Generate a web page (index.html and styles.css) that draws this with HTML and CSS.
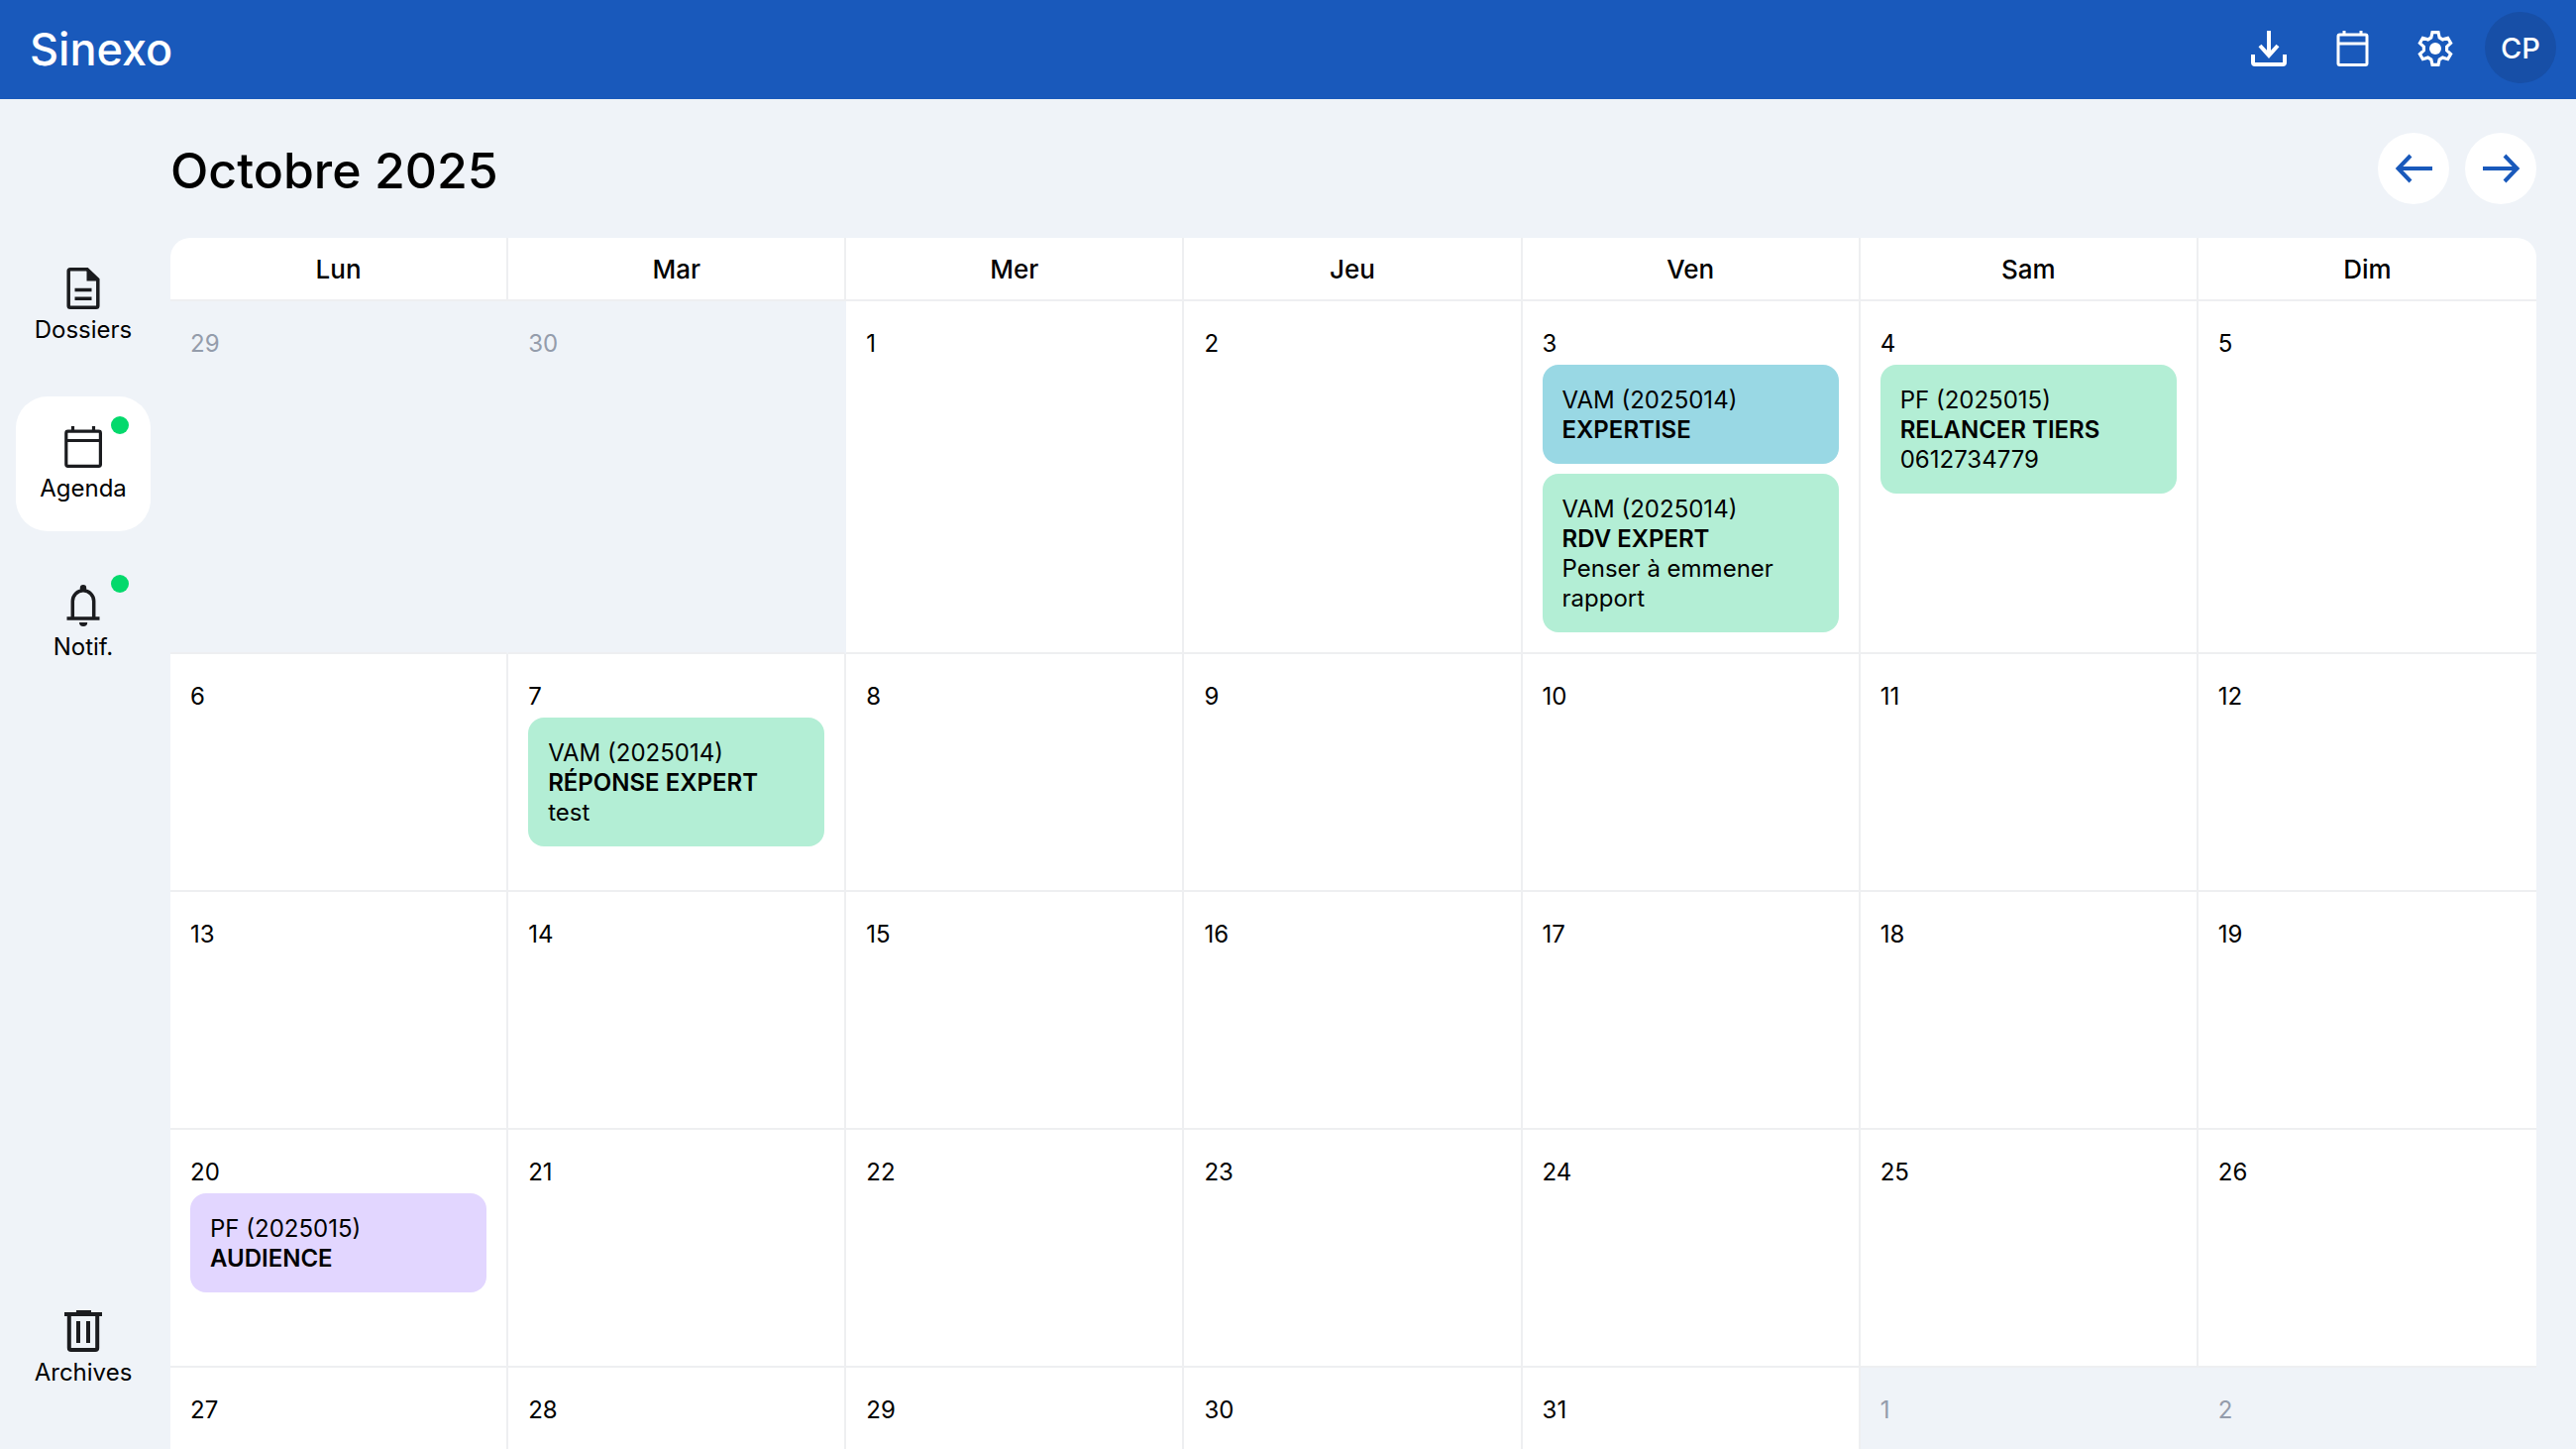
FILE: index.html
```
<!DOCTYPE html>
<html lang="fr">

<head>
    <meta charset="UTF-8">
    <meta name="viewport" content="width=device-width, initial-scale=1.0">
    <title>Sinexo - Agenda</title>
    <link rel="stylesheet" href="styles.css">
</head>

<body>
    <header class="topbar">
        <a href="#" class="brand">Sinexo</a>
        <div class="topbar-right">
            <div class="topbar-icons">
                <button type="button" class="icon-btn" aria-label="Télécharger">
                    <svg class="top-icon" viewBox="0 0 48 48" fill="none" stroke="currentColor" stroke-width="4">
                        <path d="M24 7v25M15 22l9 10 9-10M8 31v8q0 2 2 2h28q2 0 2-2v-8" />
                    </svg>
                </button>
                <button type="button" class="icon-btn" aria-label="Calendrier">
                    <svg class="top-icon" viewBox="0 0 48 48" fill="none" stroke="currentColor" stroke-width="3">
                        <rect x="10" y="11" width="29" height="30.500" rx="1.500" />
                        <path d="M10 20h29M16 7v4M33 7v4" />
                    </svg>
                </button>
                <button type="button" class="icon-btn" aria-label="Paramètres">
                    <svg class="top-icon" viewBox="0 0 48 48">
                        <g transform="translate(24 25)">
                            <path fill="none" stroke="currentColor" stroke-width="3.200"
                                d="M-3-16.300H3L4.200-11 7.400-9.100 12.600-10.700 15.600-5.500 11.600-1.900V1.900L15.600 5.500 12.600 10.700 7.400 9.100 4.200 11 3 16.300H-3L-4.200 11-7.400 9.100-12.600 10.700-15.600 5.500-11.600 1.900V-1.900L-15.600-5.500-12.600-10.700-7.400-9.100-4.200-11z" />
                            <circle r="6" fill="currentColor" />
                        </g>
                    </svg>
                </button>
            </div>
            <button type="button" class="avatar">CP</button>
        </div>
    </header>

    <div class="layout">
        <nav class="sidebar">
            <a href="#" class="nav-item">
                <svg class="nav-icon" viewBox="0 0 50 50" fill="none" stroke="currentColor" stroke-width="3.500">
                    <path d="M12 3.700h17L39.800 14v26.500q0 1.800-1.800 1.800H12q-1.800 0-1.800-1.800v-35q0-1.800 1.800-1.800z" />
                    <path d="M16.500 24.500h17M16.500 33.300h17" />
                    <path d="M28.500 3v12.500H41z" fill="currentColor" stroke="none" />
                </svg>
                <span>Dossiers</span>
            </a>
            <a href="#" class="nav-item nav-active">
                <svg class="nav-icon" viewBox="0 0 50 50" fill="none" stroke="currentColor" stroke-width="3.200">
                    <rect x="7.800" y="7.200" width="34.600" height="35.200" rx="1.800" />
                    <path d="M8 16.500h34M14.500 2v5M35.500 2v5" />
                </svg>
                <span>Agenda</span>
                <span class="dot"></span>
            </a>
            <a href="#" class="nav-item">
                <svg class="nav-icon" viewBox="0 0 50 50" fill="none" stroke="currentColor" stroke-width="3.500">
                    <path d="M14.300 36V18.500a10.700 10.700 0 0 1 21.400 0V36M8.500 36h33" />
                    <circle cx="25" cy="5.200" r="3.200" fill="currentColor" stroke="none" />
                    <path d="M21 40h8.200a4.100 4.100 0 0 1-8.200 0z" fill="currentColor" stroke="none" />
                </svg>
                <span>Notif.</span>
                <span class="dot"></span>
            </a>
            <a href="#" class="nav-item nav-bottom">
                <svg class="nav-icon" viewBox="0 0 50 50" fill="none" stroke="currentColor" stroke-width="4">
                    <path d="M6 6h38M18 4h15M20 13v22M30 13v22M10.800 7v33q0 2 2 2h24.400q2 0 2-2V7" />
                </svg>
                <span>Archives</span>
            </a>
        </nav>

        <main class="content">
            <div class="month-bar">
                <h1>Octobre 2025</h1>
                <div class="month-nav">
                    <button type="button" class="round-btn" aria-label="Mois précédent">
                        <svg class="arrow" viewBox="0 0 40 40" fill="none" stroke="currentColor" stroke-width="4">
                            <path d="M39 20H5M17 7L4.500 20 17 33" />
                        </svg>
                    </button>
                    <button type="button" class="round-btn" aria-label="Mois suivant">
                        <svg class="arrow" viewBox="0 0 40 40" fill="none" stroke="currentColor" stroke-width="4">
                            <path d="M2 20h34M24 7l12.500 13L24 33" />
                        </svg>
                    </button>
                </div>
            </div>

            <table class="calendar">
                <thead>
                    <tr>
                        <th>Lun</th>
                        <th>Mar</th>
                        <th>Mer</th>
                        <th>Jeu</th>
                        <th>Ven</th>
                        <th>Sam</th>
                        <th>Dim</th>
                    </tr>
                </thead>
                <tbody>
                    <tr>
                        <td class="other-month"><div class="day">29</div></td>
                        <td class="other-month"><div class="day">30</div></td>
                        <td><div class="day">1</div></td>
                        <td><div class="day">2</div></td>
                        <td>
                            <div class="day">3</div>
                            <div class="event event-blue">
                                <p>VAM (2025014)</p>
                                <p class="event-title">EXPERTISE</p>
                            </div>
                            <div class="event event-green">
                                <p>VAM (2025014)</p>
                                <p class="event-title">RDV EXPERT</p>
                                <p>Penser à emmener rapport</p>
                            </div>
                        </td>
                        <td>
                            <div class="day">4</div>
                            <div class="event event-green">
                                <p>PF (2025015)</p>
                                <p class="event-title">RELANCER TIERS</p>
                                <p>0612734779</p>
                            </div>
                        </td>
                        <td><div class="day">5</div></td>
                    </tr>
                    <tr>
                        <td><div class="day">6</div></td>
                        <td>
                            <div class="day">7</div>
                            <div class="event event-green">
                                <p>VAM (2025014)</p>
                                <p class="event-title">RÉPONSE EXPERT</p>
                                <p>test</p>
                            </div>
                        </td>
                        <td><div class="day">8</div></td>
                        <td><div class="day">9</div></td>
                        <td><div class="day">10</div></td>
                        <td><div class="day">11</div></td>
                        <td><div class="day">12</div></td>
                    </tr>
                    <tr>
                        <td><div class="day">13</div></td>
                        <td><div class="day">14</div></td>
                        <td><div class="day">15</div></td>
                        <td><div class="day">16</div></td>
                        <td><div class="day">17</div></td>
                        <td><div class="day">18</div></td>
                        <td><div class="day">19</div></td>
                    </tr>
                    <tr>
                        <td>
                            <div class="day">20</div>
                            <div class="event event-purple">
                                <p>PF (2025015)</p>
                                <p class="event-title">AUDIENCE</p>
                            </div>
                        </td>
                        <td><div class="day">21</div></td>
                        <td><div class="day">22</div></td>
                        <td><div class="day">23</div></td>
                        <td><div class="day">24</div></td>
                        <td><div class="day">25</div></td>
                        <td><div class="day">26</div></td>
                    </tr>
                    <tr>
                        <td><div class="day">27</div></td>
                        <td><div class="day">28</div></td>
                        <td><div class="day">29</div></td>
                        <td><div class="day">30</div></td>
                        <td><div class="day">31</div></td>
                        <td class="other-month"><div class="day">1</div></td>
                        <td class="other-month"><div class="day">2</div></td>
                    </tr>
                </tbody>
            </table>
        </main>
    </div>
</body>

</html>
```

FILE: styles.css
```
* {
    box-sizing: border-box;
}

body {
    margin: 0;
    height: 100vh;
    display: flex;
    flex-direction: column;
    overflow: hidden;
    background-color: #eff3f8;
    color: #000;
    font-family: Inter, "Noto Sans", sans-serif;
    font-size: 24px;
    line-height: 30px;
}

a {
    color: inherit;
    text-decoration: none;
}

button {
    border: none;
    padding: 0;
    background: none;
    font: inherit;
    color: inherit;
    cursor: pointer;
}

h1,
p {
    margin: 0;
}

/* top bar */
.topbar {
    display: flex;
    flex-shrink: 0;
    justify-content: space-between;
    align-items: center;
    height: 100px;
    padding: 0 20px 0 30px;
    background-color: #1959bb;
    color: #fff;
}

.brand {
    font-size: 45px;
    line-height: 72px;
    font-weight: 500;
}

.topbar-right {
    display: flex;
    gap: 14px;
    padding-bottom: 4px;
}

.topbar-icons {
    display: flex;
    gap: 12px;
}

.icon-btn,
.avatar,
.round-btn {
    display: flex;
    align-items: center;
    justify-content: center;
    width: 72px;
    height: 72px;
    border-radius: 50%;
}

.top-icon {
    width: 48px;
    height: 48px;
}

.avatar {
    padding-top: 2px;
    background-color: #174fa7;
    font-size: 29px;
    font-weight: 500;
}

/* side menu */
.layout {
    display: flex;
    flex: 1;
    min-height: 0;
    overflow: hidden;
}

.sidebar {
    display: flex;
    flex-direction: column;
    gap: 24px;
    padding: 140px 20px 34px 16px;
}

.nav-item {
    position: relative;
    display: flex;
    flex-direction: column;
    align-items: center;
    justify-content: center;
    width: 136px;
    height: 136px;
    border-radius: 32px;
}

.nav-active {
    background-color: #fff;
}

.nav-bottom {
    margin-top: auto;
}

.nav-icon {
    width: 50px;
    height: 50px;
    color: #1b1c1f;
}

.dot {
    position: absolute;
    top: 20px;
    right: 22px;
    width: 18px;
    height: 18px;
    border-radius: 50%;
    background-color: #04d96c;
}

/* month */
.content {
    flex: 1;
    padding-right: 40px;
}

.month-bar {
    display: flex;
    align-items: center;
    justify-content: space-between;
    height: 140px;
}

.month-bar h1 {
    padding-top: 4px;
    font-size: 50px;
    line-height: 60px;
    font-weight: 500;
}

.month-nav {
    display: flex;
    gap: 16px;
}

.round-btn {
    background-color: #fff;
    color: #1959bb;
}

.arrow {
    width: 40px;
    height: 40px;
}

/* calendar */
.calendar {
    width: 100%;
    table-layout: fixed;
    border-collapse: separate;
    border-spacing: 0;
}

.calendar th,
.calendar td {
    background-color: #fff;
    border-right: 2px solid #eeeff1;
    border-bottom: 2px solid #eeeff1;
}

.calendar th:last-child,
.calendar td:last-child {
    border-right: none;
}

.calendar th {
    height: 64px;
    padding: 2px 0 0;
    font-size: 26px;
    font-weight: 500;
}

.calendar th:first-child {
    border-top-left-radius: 20px;
}

.calendar th:last-child {
    border-top-right-radius: 20px;
}

.calendar td {
    height: 240px;
    padding: 22px 20px 20px;
    vertical-align: top;
}

.calendar td.other-month {
    background-color: #eff3f8;
    border-right-color: #eff3f8;
    color: #949cab;
}

.day {
    line-height: 42px;
}

.event {
    padding: 21px 20px 19px;
    border-radius: 16px;
}

.event + .event {
    margin-top: 10px;
}

.event-title {
    font-weight: 600;
}

.event-blue {
    background-color: #99d8e4;
}

.event-green {
    background-color: #b3eed5;
}

.event-purple {
    background-color: #e2d6ff;
}
```
